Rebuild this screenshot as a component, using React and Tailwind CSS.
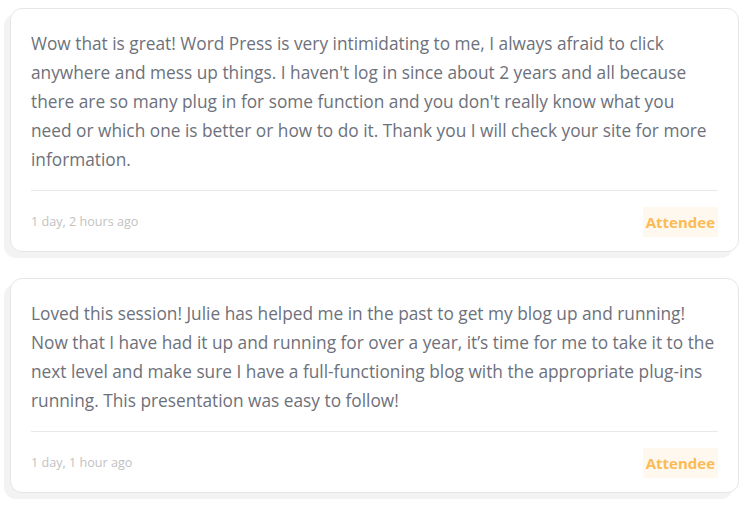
import React from 'react';

const comments = [
  {
    id: 1,
    content:
      "Wow that is great! Word Press is very intimidating to me, I always afraid to click anywhere and mess up things. I haven't log in since about 2 years and all because there are so many plug in for some function and you don't really know what you need or which one is better or how to do it. Thank you I will check your site for more information.",
    time: '1 day, 2 hours ago',
    role: 'Attendee',
  },
  {
    id: 2,
    content:
      'Loved this session! Julie has helped me in the past to get my blog up and running! Now that I have had it up and running for over a year, it\u2019s time for me to take it to the next level and make sure I have a full-functioning blog with the appropriate plug-ins running. This presentation was easy to follow!',
    time: '1 day, 1 hour ago',
    role: 'Attendee',
  },
];

const CommentCard = ({ content, time, role }) => {
  return (
    <div className="bg-white border border-[#e6e6e6] rounded-[12px] shadow-[-6px_6px_0_#f3f3f3] pt-[20px] pb-[14px] px-[20px]">
      <p className="text-[17.3px] leading-[29px] text-[#6d717b]">{content}</p>
      <div className="border-t border-[#e8e8e8] mt-[16px] pt-[16px] flex justify-between items-center">
        <span className="text-[12.6px] text-[#c2c2c2]">{time}</span>
        <span className="bg-[#fff8ef] text-[#fbbb55] font-bold text-[15px] h-[30px] px-[3px] flex items-center">
          {role}
        </span>
      </div>
    </div>
  );
};

export default function App() {
  return (
    <div
      className="bg-white w-[751px] h-[510px] pt-[8px] pl-[10px] pr-[12px] flex flex-col gap-[26px]"
      style={{ fontFamily: '"Open Sans", "Noto Sans", sans-serif' }}
    >
      {comments.map((c) => (
        <CommentCard key={c.id} content={c.content} time={c.time} role={c.role} />
      ))}
    </div>
  );
}
